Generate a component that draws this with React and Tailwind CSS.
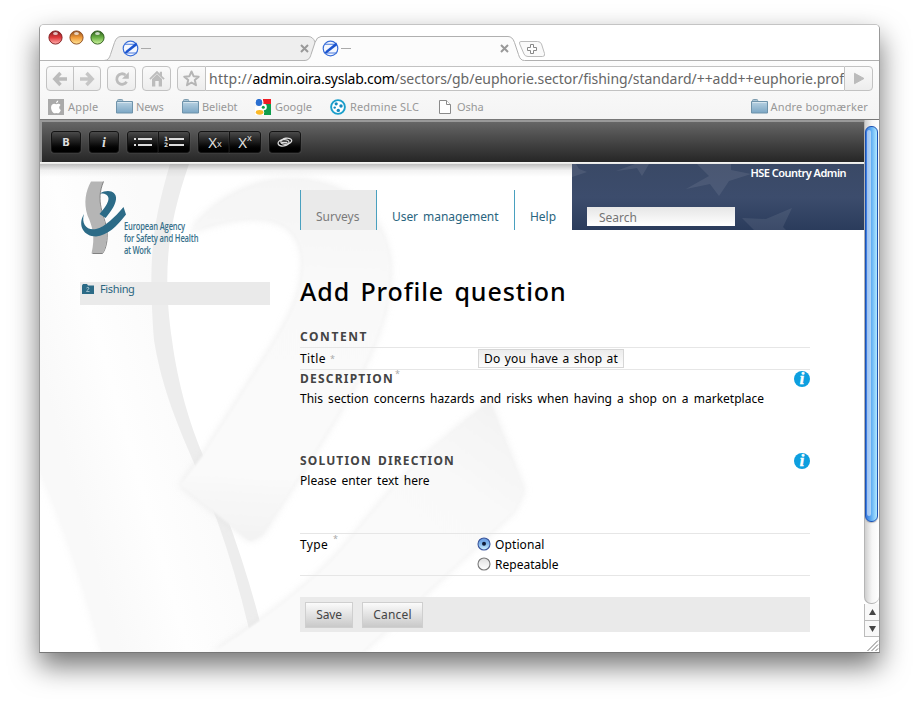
import { useLayoutEffect, useRef } from "react";

const SANS = "font-['Noto_Sans',sans-serif]";

/* A single line of text, tracked so that its glyphs fill the width w. */
function Fit({ w, className = "", children }) {
  const ref = useRef(null);
  useLayoutEffect(() => {
    const el = ref.current;
    const apply = () => {
      el.style.letterSpacing = "0px";
      const natural = el.getBoundingClientRect().width;
      el.style.letterSpacing = (w - 0.5 - natural) / el.textContent.length + "px";
    };
    apply();
    document.fonts?.ready.then(apply);
  }, [w]);
  return (
    <span ref={ref} className={`inline-block shrink-0 whitespace-pre ${className}`}>
      {children}
    </span>
  );
}

function Favicon() {
  return (
    <svg width="17" height="17" viewBox="0 0 17 17" className="shrink-0">
      <circle cx="8.5" cy="8.5" r="7.3" fill="#f4f7fe" stroke="#3a6fd8" strokeWidth="1.2" />
      <path d="M2.600 4.300H13.500M3.500 13H15" stroke="#4a7bdc" strokeWidth="1.100" />
      <path d="M14.200 2.600L4 10.800l-1.600 2.400h2.400L15.400 5z" fill="#1c55cf" />
    </svg>
  );
}

function Light({ id, dark, mid, light }) {
  return (
    <svg width="15" height="15" viewBox="0 0 15 15">
      <defs>
        <linearGradient id={id} x1="0" y1="0" x2="0" y2="1">
          <stop offset="0" stopColor={dark} />
          <stop offset=".5" stopColor={mid} />
          <stop offset="1" stopColor={light} />
        </linearGradient>
      </defs>
      <circle cx="7.5" cy="7.5" r="6.6" fill={`url(#${id})`} stroke={dark} strokeWidth=".9" />
      <ellipse cx="7.5" cy="3.4" rx="2.400" ry="1.500" fill="#fff" opacity=".7" />
    </svg>
  );
}

function TabStrip() {
  return (
    <div className="relative h-[36px] bg-white">
      <svg className="absolute left-0 top-0" width="839" height="36" viewBox="40 25 839 36">
        <path d="M40 60.5H104C108 60.5 109.500 58 110.500 54.500L114.500 42.500Q116.500 36.500 121 36.500H308Q313 36.500 315 42V60.500" fill="#eee" stroke="#b4b4b4" />
        <path d="M104 60.500H523" stroke="#b4b4b4" />
        <path d="M304 60.500C308.500 60.500 310 58 311 54.500L315 42.500Q317 36.500 321 36.500H508Q512.500 36.500 514.500 42.500L518.500 54.500Q520 60.500 524.500 60.500V62H304Z" fill="#fcfcfc" />
        <path d="M304 60.500C308.500 60.500 310 58 311 54.500L315 42.500Q317 36.500 321 36.500H508Q512.500 36.500 514.500 42.500L518.500 54.500Q520 60.500 524.500 60.500H879" fill="none" stroke="#b0b0b0" />
        <path d="M521 41.500H537.500Q540.500 41.500 541.500 44L544.500 53.500Q545.300 56.500 542.500 56.500H528Q525 56.500 524 54L519.700 44Q518.700 41.500 521 41.500Z" fill="#fafafa" stroke="#bbb" />
        <path d="M530.500 44.500h3v3h3v3h-3v3h-3v-3h-3v-3h3z" fill="#fff" stroke="#888" />
      </svg>
      <div className="relative flex h-full items-start">
        <div className="flex gap-[6px] pl-[8px] pt-[5px]">
          <Light id="red" dark="#7e1d1f" mid="#e0393c" light="#ffb0ae" />
          <Light id="amber" dark="#8a4a1e" mid="#f09a38" light="#ffe79a" />
          <Light id="green" dark="#2c5a1c" mid="#6bb146" light="#d0f5a0" />
        </div>
        <Tab className="ml-[17px]" />
        <Tab className="ml-[13px]" />
      </div>
    </div>
  );
}

function Tab({ className }) {
  return (
    <div className={`flex w-[187px] items-center pt-[15px] ${className}`}>
      <Favicon />
      <span className="ml-[2px] h-px w-[10px] bg-[#aaa]" />
      <svg className="ml-auto" width="9" height="9" viewBox="0 0 9 9">
        <path d="M1 1l7 7M8 1L1 8" stroke="#999" strokeWidth="2" />
      </svg>
    </div>
  );
}

const chromeBtn =
  "flex h-[25px] items-center justify-center border border-[#c2c2c2] bg-gradient-to-b from-[#fafafa] to-[#ededed]";

function NavBar() {
  return (
    <div className="flex h-[34px] pl-[6px] pt-[5px]">
      <div className={`${chromeBtn} w-[28px] rounded-l-[4px]`}>
        <svg width="16" height="16" viewBox="0 0 16 16" fill="none" stroke="#bbb" strokeWidth="3.400">
          <path d="M8.500 2L2.800 8l5.700 6M3.500 8H15" />
        </svg>
      </div>
      <div className={`${chromeBtn} -ml-px w-[28px] rounded-r-[4px]`}>
        <svg width="16" height="16" viewBox="0 0 16 16" fill="none" stroke="#c6c6c6" strokeWidth="3.400">
          <path d="M7.500 2l5.700 6-5.700 6M12.500 8H1" />
        </svg>
      </div>
      <div className={`${chromeBtn} ml-[6px] w-[29px] rounded-[4px]`}>
        <svg width="16" height="16" viewBox="0 0 16 16">
          <path d="M12.600 10.800A5.300 5.300 0 1 1 11.500 4" fill="none" stroke="#bcbcbc" strokeWidth="2.800" />
          <path d="M14.800 1v6.800H8z" fill="#bcbcbc" />
        </svg>
      </div>
      <div className={`${chromeBtn} ml-[6px] w-[29px] rounded-[4px]`}>
        <svg width="16" height="17" viewBox="0 0 16 17" fill="#bcbcbc">
          <path d="M8 .8L.3 8.600l1.200 1.200L8 3.400l6.500 6.400 1.200-1.200-2.700-2.700V1.800h-2.200v1.900z" />
          <path d="M3 9l5-5 5 5v7.500H9.700V11H6.300v5.500H3z" />
        </svg>
      </div>
      <div className={`${chromeBtn} ml-[6px] w-[29px] rounded-l-[4px]`}>
        <svg width="17" height="17" viewBox="0 0 17 17">
          <path d="M8.500 1.500l2.100 4.700 5.100.5-3.900 3.400 1.200 5.100-4.500-2.700-4.500 2.700 1.200-5.100L1.300 6.700l5.100-.5z" fill="#f4f4f4" stroke="#b5b5b5" strokeWidth="2" strokeLinejoin="round" />
        </svg>
      </div>
      <div className="flex h-[25px] w-[638px] items-center overflow-hidden border-y border-[#c2c2c2] bg-white pl-[3px] text-[14px] leading-[24px] text-[#666]">
        <Fit w={44}>http://</Fit>
        <Fit w={142.500} className="text-black">admin.oira.syslab.com</Fit>
        <Fit w={450}>/sectors/gb/euphorie.sector/fishing/standard/++add++euphorie.prof</Fit>
      </div>
      <div className={`${chromeBtn} w-[29px] rounded-r-[4px]`}>
        <svg width="12" height="13" viewBox="0 0 12 13"><path d="M1.500 1.300v10.400L11 6.500z" fill="#bbb" stroke="#bbb" strokeLinejoin="round" /></svg>
      </div>
    </div>
  );
}

function FolderIcon() {
  return (
    <svg width="17" height="15" viewBox="0 0 17 15" className="shrink-0">
      <defs>
        <linearGradient id="folder" x1="0" y1="0" x2="0" y2="1">
          <stop offset="0" stopColor="#b9d2e2" />
          <stop offset="1" stopColor="#7ba6c4" />
        </linearGradient>
      </defs>
      <path d="M1.500 3V1.500Q1.500.5 2.500.5h3.300q.9 0 .9 1V3" fill="#a9c5d6" stroke="#7e9caf" />
      <path d="M.5 2.500h16v11.500H.5z" fill="url(#folder)" stroke="#6f93aa" />
      <path d="M1.500 3.500h14" stroke="#d7e6ef" />
    </svg>
  );
}

function Bookmarks() {
  return (
    <div className="flex h-[24px] items-center pb-px text-[11px] leading-[14px] text-[#989898]">
      <div className="ml-[8px] flex w-[68px] items-center gap-[4px]">
        <svg width="16" height="16" viewBox="0 0 16 16">
          <path d="M0 0h16v16H0z" fill="#aaa" />
          <path d="M10.200 1.500C9 1.700 8 2.800 8.100 4.200c1.300 0 2.300-1.300 2.100-2.700zM12.500 6C11 4.200 9.400 4.900 8.200 5.200 7 4.900 5.600 4.200 4 5.700c-1.700 2-.8 5.400.8 7.600 1.200 1.500 2 .8 3.400.7 1.400.1 2.100.8 3.300-.6.700-.8 1-1.500 1.300-2.300-2-1-2.200-3.800-.3-5.100z" fill="#fff" />
        </svg>
        <Fit w={31}>Apple</Fit>
      </div>
      <div className="flex w-[66px] items-center gap-[3px]"><FolderIcon /><Fit w={28}>News</Fit></div>
      <div className="flex w-[73px] items-center gap-[3px]"><FolderIcon /><Fit w={36}>Beliebt</Fit></div>
      <div className="flex w-[75px] items-center gap-[4px]">
        <svg width="16" height="16" viewBox="0 0 16 16">
          <path d="M8 0h8v5H8z" fill="#ee1c23" /><path d="M8 5h8v11H8z" fill="#0f9d4c" />
          <path d="M0 7.500h7L9 12v4H0z" fill="#fff" />
          <circle cx="8.600" cy="8" r="3.200" fill="#fff" /><circle cx="8.300" cy="8.300" r="1.500" fill="#0f9d4c" />
          <ellipse cx="4.200" cy="3.400" rx="4.300" ry="4" fill="#fff" />
          <ellipse cx="4" cy="3.400" rx="3.300" ry="3.500" fill="#2a6fd0" />
          <ellipse cx="4.600" cy="13.300" rx="4.600" ry="3" fill="#fff" />
          <ellipse cx="4.600" cy="13.300" rx="3.800" ry="2.400" fill="#fbb827" />
        </svg>
        <Fit w={37.500}>Google</Fit>
      </div>
      <div className="flex w-[109px] items-center gap-[4px]">
        <svg width="16" height="16" viewBox="0 0 16 16">
          <circle cx="8" cy="8" r="6.900" fill="#fff" stroke="#1a9fcb" strokeWidth="1.900" />
          <g fill="#1488bd"><circle cx="6.200" cy="4.800" r="1.600" /><circle cx="11" cy="7" r="1.700" /><circle cx="4.700" cy="8.600" r="1.200" /><circle cx="8.300" cy="11.400" r="1.700" /></g>
        </svg>
        <Fit w={69.500}>Redmine SLC</Fit>
      </div>
      <div className="flex items-center gap-[6px]">
        <svg width="12" height="14" viewBox="0 0 12 14" fill="#fff" stroke="#8a8a8a"><path d="M.5.5h7l4 4v9H.5z" /><path d="M7.500.5v4h4" /></svg>
        <Fit w={27}>Osha</Fit>
      </div>
      <div className="ml-auto flex items-center gap-[3px] pr-[11px]"><FolderIcon /><Fit w={98}>Andre bogmærker</Fit></div>
    </div>
  );
}

const edBtn =
  "flex h-[22px] items-center justify-center border border-[#141414] bg-gradient-to-b from-[#4b4b4b] via-[#1c1c1c] to-[#000] shadow-[0_0_1px_#888] text-[#ddd]";

function EditorBar() {
  return (
    <div className="flex h-[42px] shrink-0 border-l-2 border-t-2 border-[#999]">
      <div className="flex flex-1 items-start bg-gradient-to-b from-[#666] to-[#262626] pl-[9px] pt-[9px]">
        <div className={`${edBtn} w-[30px] rounded-[3px] font-['DejaVu_Sans',sans-serif] text-[10px] font-bold`}>B</div>
        <div className={`${edBtn} ml-[8px] w-[30px] rounded-[3px] font-['Liberation_Serif',serif] text-[14px] font-bold italic`}>i</div>
        <div className={`${edBtn} ml-[8px] w-[32px] rounded-l-[3px]`}>
          <svg width="20" height="12" viewBox="0 0 20 12" fill="#ddd"><path d="M1 2h2v2H1zM1 8h2v2H1zM5 2h14v2H5zM5 8h14v2H5z" /></svg>
        </div>
        <div className={`${edBtn} -ml-px w-[32px] gap-px rounded-r-[3px]`}>
          <span className="flex flex-col font-['DejaVu_Sans',sans-serif] text-[6px] font-bold leading-[6px]"><span>1</span><span>2</span></span>
          <svg width="15" height="12" viewBox="0 0 15 12" fill="#ddd"><path d="M0 2h15v2H0zM0 8h15v2H0z" /></svg>
        </div>
        <div className={`${edBtn} ml-[8px] w-[32px] rounded-l-[3px] pl-[2px] text-[15px]`}>X<sub className="text-[9px]">x</sub></div>
        <div className={`${edBtn} -ml-px w-[32px] rounded-r-[3px] text-[15px]`}>X<sup className="text-[9px]">x</sup></div>
        <div className={`${edBtn} ml-[8px] w-[32px] rounded-[3px]`}>
          <svg width="16" height="10" viewBox="0 0 16 10" fill="none" stroke="#ddd" strokeWidth="1.300">
            <ellipse cx="6.500" cy="5.800" rx="5.500" ry="3.200" transform="rotate(-8 6.500 5.500)" /><ellipse cx="9.300" cy="4.200" rx="5.500" ry="3" transform="rotate(-8 9.500 4.500)" /><path d="M4.500 5.500h6" />
          </svg>
        </div>
      </div>
    </div>
  );
}

function Ribbons() {
  return (
    <svg className="absolute left-0 top-0" width="824" height="488" viewBox="40 164 824 488">
      <defs>
        <filter id="soft" x="-10%" y="-10%" width="120%" height="120%"><feGaussianBlur stdDeviation="4" /></filter>
        <filter id="edge"><feGaussianBlur stdDeviation="1" /></filter>
        <linearGradient id="band" gradientUnits="userSpaceOnUse" x1="60" y1="440" x2="200" y2="400">
          <stop offset="0" stopColor="#f9f9f9" /><stop offset=".45" stopColor="#fefefe" /><stop offset="1" stopColor="#fafafa" />
        </linearGradient>
        <linearGradient id="loop" gradientUnits="userSpaceOnUse" x1="270" y1="180" x2="250" y2="546">
          <stop offset="0" stopColor="#f5f5f5" /><stop offset=".25" stopColor="#f9f9f9" /><stop offset=".8" stopColor="#fafafa" /><stop offset="1" stopColor="#f2f2f2" />
        </linearGradient>
        <linearGradient id="tail" gradientUnits="userSpaceOnUse" x1="490" y1="390" x2="370" y2="560">
          <stop offset="0" stopColor="#f2f2f2" /><stop offset=".45" stopColor="#f9f9f9" /><stop offset="1" stopColor="#fafafa" />
        </linearGradient>
      </defs>
      <path d="M30 164H170C152 225 148 260 154 340C162 390 180 430 194 463Q230 550 250 627V652H102Q75 550 40 470Z" fill="#e8e8e8" filter="url(#soft)" opacity=".5" />
      <path d="M30 164H170C152 225 148 260 154 340C162 390 180 430 194 463Q230 550 250 627V652H102Q75 550 40 470Z" fill="url(#band)" />
      <path d="M170 164H189C168 225 162 270 172 340C178 385 190 425 203 455Q240 545 260 622L249 629Q235 570 217 520L194 463C180 430 162 390 154 340C148 260 152 225 170 164Z" fill="#ededed" />
      <path d="M260 622L249 629L215 652H270Z" fill="#fafafa" />
      <path d="M190 232C220 192 260 180 285 180C350 176 390 220 390 270C390 340 340 410 300 475L262 535L250 541L180 485L203 455L270 350C295 310 303 290 303 260C300 220 265 205 190 232Z" fill="#dedede" filter="url(#soft)" opacity=".6" />
      <path d="M190 232C220 192 260 180 285 180C350 176 390 220 390 270C390 340 340 410 300 475L262 535L250 541L180 485L203 455L270 350C295 310 303 290 303 260C300 220 265 205 190 232Z" fill="url(#loop)" filter="url(#edge)" />
      <path d="M490 402L524 490L515 510Q440 580 362 652H213Q310 590 350 540C390 490 420 455 490 402Z" fill="#e0e0e0" filter="url(#soft)" opacity=".6" />
      <path d="M490 402L524 490L515 510Q440 580 362 652H213Q310 590 350 540C390 490 420 455 490 402Z" fill="url(#tail)" filter="url(#edge)" />
    </svg>
  );
}

function Logo() {
  return (
    <svg className="block" width="130" height="80" viewBox="76 178 130 80">
      <path d="M91 181.500h12.500C95 202 104 215 106.500 230c1 10-1 19-4.500 23.500H91.500c4-17 1-27-4-38-4-13-2-24 3.500-34z" fill="#b5b5b5" />
      <path d="M103.500 181.500C95 202 104.500 215 107 230c1 10-1 19-4.500 23.500h-10" fill="none" stroke="#777" strokeWidth=".9" />
      <path d="M100 193.500c8-5 17-2 16 6-1 7-6 13-10.500 18.500l-6-4C104 209 108.500 203 108.500 198.500c-.3-4-4-5.500-8.500-5z" fill="#2c6b87" />
      <path d="M123.500 207l2.500 7.500c-9 12-19 21-30 22-12 0-19-11-12-22.500-3 10 3 17 12 15 9-2 19-12 27.500-22z" fill="#2c6b87" />
      <g fill="#37708a" fontFamily="'Open Sans', sans-serif" fontSize="10" fontWeight="600">
        <text transform="translate(124 230.300) scale(.76 1)" textLength="80.500">European Agency</text>
        <text transform="translate(124 242) scale(.76 1)" textLength="98">for Safety and Health</text>
        <text transform="translate(124 253.700) scale(.76 1)" textLength="35.500">at Work</text>
      </g>
    </svg>
  );
}

function Info() {
  return (
    <svg width="16" height="16" viewBox="0 0 16 16">
      <circle cx="8" cy="8" r="8" fill="#0d9fdf" />
      <text x="7.900" y="13.200" textAnchor="middle" fontFamily="'Liberation Serif', serif" fontSize="16" fontWeight="700" fontStyle="italic" fill="#fff" stroke="#fff" strokeWidth=".5">i</text>
    </svg>
  );
}

function Header() {
  return (
    <div className="flex h-[66px]">
      <nav className="flex pt-[26px] text-[12px] leading-[14px] text-[#2a6580]">
        <div className="flex h-[40px] w-[76px] items-end border-l border-[#49a0bf] bg-[#eaeaea] pb-[6px] pl-[15px] text-[#7a7a7a]"><Fit w={44}>Surveys</Fit></div>
        <div className="flex h-[40px] w-[138px] items-end border-l border-[#49a0bf] pb-[6px] pl-[15px]"><Fit w={107} className="[word-spacing:2px]">User management</Fit></div>
        <div className="flex h-[40px] w-[58px] items-end border-l border-[#49a0bf] pb-[6px] pl-[15px]"><Fit w={26.500}>Help</Fit></div>
      </nav>
      <div className="relative flex flex-1 flex-col bg-gradient-to-b from-[#3a4966] via-[#3c4c6c] to-[#2b3c5c]">
        <svg className="absolute inset-0" width="292" height="66" viewBox="572 164 292 66" fill="#fff" opacity=".08">
          <path d="M572 164h4l3 5 8 3-15 5zM616 171l19-7h14l-7 12-5-8-6 1zM686 189l23-13-12-12h34l0 6 20 4-22 7-10 15-9-12zM742 218l24 1 26-11-9 19 3 3h-32z" />
        </svg>
        <div className="relative flex h-[43px] justify-end pr-[18px] pt-[1px] text-[11px] font-semibold leading-[16px] text-white"><Fit w={96}>HSE Country Admin</Fit></div>
        <div className="relative ml-[15px] flex h-[19px] w-[148px] items-center bg-gradient-to-b from-[#e6e6e6] to-white pl-[12px] pt-[2px] text-[12px] leading-[16px] text-[#757575]"><Fit w={38.500}>Search</Fit></div>
      </div>
    </div>
  );
}

const heading = "text-[12px] font-bold text-[#444]";

function Form() {
  return (
    <div className="w-[510px] text-[12px] leading-[18px] text-black">
      <h1 className="mt-[44px] h-[34px] text-[25px] leading-[34px] font-medium"><Fit w={267} className="[word-spacing:3px]">Add Profile question</Fit></h1>
      <h2 className={`${heading} mt-[19px] h-[20px] leading-[20px]`}><Fit w={68.500}>CONTENT</Fit></h2>
      <div className="flex h-[22px] items-center border-t border-[#e6e6e6]">
        <div className="flex w-[178px]"><Fit w={26.500}>Title</Fit><span className="ml-[4px] text-[9px] text-[#aaa]">*</span></div>
        <div className="flex h-[19px] w-[146px] items-center border border-[#d6d6d6] bg-gradient-to-b from-[#ececec] to-[#fdfdfd] pl-[5px]"><Fit w={134.500} className="[word-spacing:1px]">Do you have a shop at</Fit></div>
      </div>
      <div className="flex h-[19px] justify-between border-t border-[#e6e6e6]">
        <h2 className={`${heading} flex`}><Fit w={94.500}>DESCRIPTION</Fit><span className="-mt-[5px] ml-px text-[9px] font-normal text-[#aaa]">*</span></h2>
        <div className="pt-px"><Info /></div>
      </div>
      <p className="h-[20px] leading-[22px]"><Fit w={464.500} className="[word-spacing:2px]">This section concerns hazards and risks when having a shop on a marketplace</Fit></p>
      <div className="mt-[44px] flex h-[18px] justify-between">
        <h2 className={heading}><Fit w={155.500} className="[word-spacing:2px]">SOLUTION DIRECTION</Fit></h2>
        <div className="pt-px"><Info /></div>
      </div>
      <p className="h-[63px] leading-[21px]"><Fit w={130} className="[word-spacing:2px]">Please enter text here</Fit></p>
      <div className="flex h-[43px] border-y border-[#e6e6e6] leading-[22px]">
        <div className="flex w-[177px]"><Fit w={28.500}>Type</Fit><span className="-mt-[6px] ml-[5px] text-[9px] text-[#aaa]">*</span></div>
        <div className="flex flex-col">
          <Radio id="optional" on w={50}>Optional</Radio>
          <Radio id="repeatable" w={64}>Repeatable</Radio>
        </div>
      </div>
      <div className="mt-[21px] flex h-[35px] w-[510px] gap-[9px] bg-[#eaeaea] pl-[5px] pt-[5px] text-[#444]">
        <div className={`${formBtn} w-[48px]`}><Fit w={26}>Save</Fit></div>
        <div className={`${formBtn} w-[61px]`}><Fit w={39}>Cancel</Fit></div>
      </div>
    </div>
  );
}

const formBtn = "flex h-[26px] items-center justify-center border border-[#cfcfcf] bg-gradient-to-b from-[#fbfbfb] to-[#c9c9c9]";

function Radio({ id, on, w, children }) {
  return (
    <div className="flex h-[20px] gap-[4px]">
      <svg className="mt-[3px]" width="14" height="14" viewBox="0 0 14 14">
        <defs>
          <linearGradient id={id} x1="0" y1="0" x2="0" y2="1">
            <stop offset="0" stopColor={on ? "#6c9be0" : "#ddd"} />
            <stop offset=".45" stopColor={on ? "#7db4ea" : "#efefef"} />
            <stop offset="1" stopColor={on ? "#d4f3ff" : "#fff"} />
          </linearGradient>
        </defs>
        <circle cx="7" cy="7" r="6" fill={`url(#${id})`} stroke={on ? "#39549b" : "#7a7a7a"} strokeWidth="1.100" />
        {on && <circle cx="7" cy="6.700" r="2" fill="#101c38" />}
      </svg>
      <Fit w={w}>{children}</Fit>
    </div>
  );
}

function Scrollbar() {
  return (
    <div className="flex w-[15px] flex-col">
      <div className="flex h-[484px] flex-col rounded-b-[7px] border-b border-l border-[#b5b5b5] bg-gradient-to-r from-[#cfcfcf] via-[#f6f6f6] to-white pt-[6px]">
        <div className="h-[396px] w-[13px] rounded-[6px] border border-[#1c53b5] bg-gradient-to-r from-[#3a78dc] via-[#62b0f4] to-[#b2eaff] shadow-[0_1px_1px_#8888]">
          <div className="mx-[1px] mt-[3px] h-[386px] w-[4px] rounded-[2px] bg-white/50" />
        </div>
      </div>
      <div className="flex h-[17px] items-center justify-center border-b border-l border-[#bbb] bg-[#f8f8f8]">
        <svg width="7" height="6" viewBox="0 0 7 6"><path d="M3.500 0L7 6H0z" fill="#444" /></svg>
      </div>
      <div className="flex h-[16px] items-center justify-center border-b border-l border-[#bbb] bg-[#f8f8f8]">
        <svg width="7" height="6" viewBox="0 0 7 6"><path d="M0 0h7L3.500 6z" fill="#444" /></svg>
      </div>
      <svg width="15" height="15" viewBox="0 0 15 15" stroke="#777" className="bg-white"><path d="M3.500 14L14 3.500M7.500 14L14 7.500M11.500 14l2.500-2.500" /></svg>
    </div>
  );
}

export default function App() {
  return (
    <div className={`h-[707px] w-[919px] overflow-hidden bg-white pl-[39px] pt-[24px] ${SANS}`}>
      <div className="flex h-[629px] w-[841px] flex-col overflow-hidden rounded-t-[5px] border border-b-[#777] border-l-[#999] border-r-[#999] border-t-[#c4c4c4] bg-white shadow-[0_13px_28px_rgba(0,0,0,0.55)]">
        <TabStrip />
        <div className="h-[59px] border-b border-[#777] bg-gradient-to-b from-[#fcfcfc] to-[#f4f4f4]">
          <NavBar />
          <Bookmarks />
        </div>
        <div className="flex flex-1">
          <div className="flex w-[824px] flex-col">
            <EditorBar />
            <div className="h-[2px] bg-gradient-to-b from-[#f6f6f4] to-[#e6e6e4]" />
            <div className="relative h-[488px] overflow-hidden">
              <Ribbons />
              <div className="absolute left-0 top-0 h-[13px] w-[532px] bg-gradient-to-b from-black/25 via-black/5 to-transparent" />
              <div className="relative flex">
                <div className="w-[260px] pl-[40px]">
                  <div className="-ml-[4px] mt-[14px]"><Logo /></div>
                  <div className="mt-[24px] flex h-[23px] w-[190px] bg-[#eaeaea] pl-[2px] text-[11px] leading-[14px] text-[#2a6580]">
                    <svg className="mt-[2px]" width="12" height="10" viewBox="0 0 12 10"><path d="M0 1.500L1 0h4l1 1.500h6V10H0z" fill="#2c6b87" /><path d="M4.500 4q1.500-1.500 2.500 0c0 1.500-2.500 2.500-2.500 3.500h3" fill="none" stroke="#a9c6d4" strokeWidth=".9" /></svg>
                    <Fit w={35} className="ml-[6px]">Fishing</Fit>
                  </div>
                </div>
                <div className="flex-1"><Header /><Form /></div>
              </div>
            </div>
          </div>
          <Scrollbar />
        </div>
      </div>
    </div>
  );
}
